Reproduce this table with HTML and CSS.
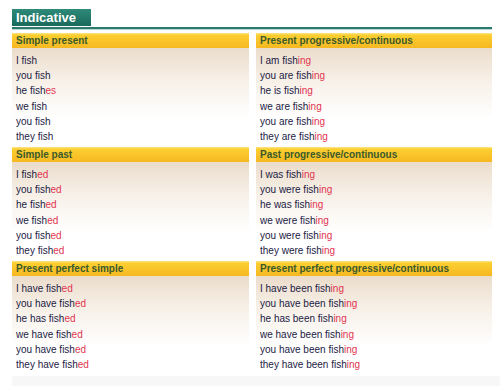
FILE: index.html
```html
<!DOCTYPE html>
<html>
<head>
<meta charset="utf-8">
<link rel="stylesheet" href="styles.css">
</head>
<body>
<div class="page">
  <div class="tabbar"><div class="tab">Indicative</div></div>
  <div class="grid">
    <div class="card">
      <div class="head">Simple present</div>
      <div class="body">
        <div class="row">I fish</div>
        <div class="row">you fish</div>
        <div class="row">he fish<span class="e">es</span></div>
        <div class="row">we fish</div>
        <div class="row">you fish</div>
        <div class="row">they fish</div>
      </div>
    </div>
    <div class="card">
      <div class="head">Present progressive/continuous</div>
      <div class="body">
        <div class="row">I am fish<span class="e">ing</span></div>
        <div class="row">you are fish<span class="e">ing</span></div>
        <div class="row">he is fish<span class="e">ing</span></div>
        <div class="row">we are fish<span class="e">ing</span></div>
        <div class="row">you are fish<span class="e">ing</span></div>
        <div class="row">they are fish<span class="e">ing</span></div>
      </div>
    </div>
    <div class="card">
      <div class="head">Simple past</div>
      <div class="body">
        <div class="row">I fish<span class="e">ed</span></div>
        <div class="row">you fish<span class="e">ed</span></div>
        <div class="row">he fish<span class="e">ed</span></div>
        <div class="row">we fish<span class="e">ed</span></div>
        <div class="row">you fish<span class="e">ed</span></div>
        <div class="row">they fish<span class="e">ed</span></div>
      </div>
    </div>
    <div class="card">
      <div class="head">Past progressive/continuous</div>
      <div class="body">
        <div class="row">I was fish<span class="e">ing</span></div>
        <div class="row">you were fish<span class="e">ing</span></div>
        <div class="row">he was fish<span class="e">ing</span></div>
        <div class="row">we were fish<span class="e">ing</span></div>
        <div class="row">you were fish<span class="e">ing</span></div>
        <div class="row">they were fish<span class="e">ing</span></div>
      </div>
    </div>
    <div class="card">
      <div class="head">Present perfect simple</div>
      <div class="body">
        <div class="row">I have fish<span class="e">ed</span></div>
        <div class="row">you have fish<span class="e">ed</span></div>
        <div class="row">he has fish<span class="e">ed</span></div>
        <div class="row">we have fish<span class="e">ed</span></div>
        <div class="row">you have fish<span class="e">ed</span></div>
        <div class="row">they have fish<span class="e">ed</span></div>
      </div>
    </div>
    <div class="card">
      <div class="head">Present perfect progressive/continuous</div>
      <div class="body">
        <div class="row">I have been fish<span class="e">ing</span></div>
        <div class="row">you have been fish<span class="e">ing</span></div>
        <div class="row">he has been fish<span class="e">ing</span></div>
        <div class="row">we have been fish<span class="e">ing</span></div>
        <div class="row">you have been fish<span class="e">ing</span></div>
        <div class="row">they have been fish<span class="e">ing</span></div>
      </div>
    </div>
  </div>
  <div class="next"></div>
</div>
</body>
</html>
```
FILE: styles.css
```css
html, body {
  margin: 0;
  padding: 0;
  background: #ffffff;
}
.page {
  padding: 9px 0 0 12px;
  font-family: "Liberation Sans", Arial, sans-serif;
  font-size: 10px;
  color: #1b1b45;
}
.tabbar {
  width: 480px;
  border-bottom: 2px solid #2a7b6d;
  padding-bottom: 1px;
  box-shadow: 0 1px 0 #b9d6d0;
}
.tab {
  width: 75px;
  height: 17px;
  padding-left: 4px;
  background: linear-gradient(#2e8a79, #196a5c);
  color: #ffffff;
  font-weight: bold;
  font-size: 13px;
  line-height: 17px;
}
.grid {
  width: 480px;
  margin-top: 4px;
  display: grid;
  grid-template-columns: 237px 236px;
  column-gap: 7px;
}
.card {
  height: 114px;
  background: linear-gradient(#ebdccb 15px, #f6efe6 45px, #ffffff 85px);
}
.head {
  height: 15px;
  line-height: 16px;
  padding-left: 4px;
  font-weight: bold;
  color: #3b5a2b;
  background: linear-gradient(#fce58f 0px, #fbcf30 2px, #f7b822 15px);
}
.body {
  padding: 5px 0 0 4px;
}
.row {
  height: 15.2px;
  line-height: 15.2px;
  white-space: nowrap;
}
.e {
  color: #e2344f;
}
.next {
  margin-top: 1px;
  height: 12px;
  background: #f7f7f7;
}
```
